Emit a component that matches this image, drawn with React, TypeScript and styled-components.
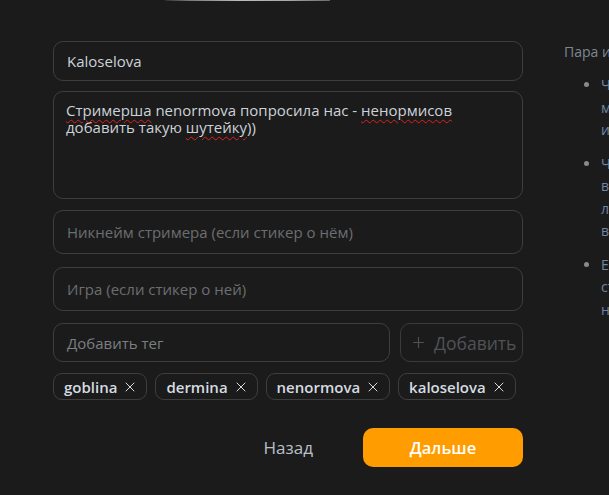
import React from "react";
import styled, { createGlobalStyle } from "styled-components";
import { X, Plus } from "lucide-react";

const Global = createGlobalStyle`
  html, body { margin: 0; padding: 0; background: #1b1b1b; overflow: hidden; }
  body { font-family: "Open Sans", "Noto Sans", sans-serif; color: #cfd3d8; }
  * { box-sizing: border-box; }
`;

const Page = styled.div`
  width: 609px;
  height: 495px;
  overflow: hidden;
  display: flex;
  flex-direction: column;
`;

const TopImage = styled.div`
  margin-left: 165px;
  width: 165px;
  height: 1px;
  background: linear-gradient(90deg, #2e2e2e, #7a7a7a 15%, #bdbdbd 45%, #a8a8a8 75%, #6a6a6a);
`;

const Body = styled.div`
  display: flex;
  gap: 41px;
  padding: 40px 0 0 53px;
`;

const FormCol = styled.div`
  width: 470px;
  flex-shrink: 0;
  display: flex;
  flex-direction: column;
`;

const Field = styled.div<{ $h: number; $mt: number; $placeholder?: boolean }>`
  height: ${(p) => p.$h}px;
  margin-top: ${(p) => p.$mt}px;
  border: 1px solid #3e3e3e;
  border-radius: 10px;
  padding: 0 13px;
  display: flex;
  align-items: center;
  font-size: 15px;
  color: ${(p) => (p.$placeholder ? "#6c6e71" : "#cdd2d8")};
  white-space: nowrap;
`;

const TextArea = styled.div`
  height: 108px;
  margin-top: 10px;
  border: 1px solid #3e3e3e;
  border-radius: 10px;
  padding: 10px 12px;
  font-size: 15px;
  line-height: 17px;
  color: #cdd2d8;
`;

const Misspelled = styled.span`
  text-decoration: underline wavy #e02020;
  text-decoration-thickness: 1px;
  text-underline-offset: 3px;
`;

const TagRow = styled.div`
  display: flex;
  gap: 10px;
  margin-top: 12px;
`;

const TagInput = styled(Field)`
  flex: 1;
  margin-top: 0;
  color: #7b7e82;
`;

const AddButton = styled.button`
  width: 123px;
  height: 39px;
  border: 1px solid #3a3a3a;
  border-radius: 10px;
  background: transparent;
  color: #505255;
  font-family: inherit;
  font-size: 17.5px;
  display: flex;
  align-items: center;
  gap: 7px;
  padding: 0 0 0 9px;
  white-space: nowrap;
`;

const Tags = styled.div`
  display: flex;
  gap: 8px;
  margin-top: 11px;
`;

const Tag = styled.div`
  height: 27px;
  border: 1px solid #3e3e3e;
  border-radius: 9px;
  padding: 0 8px 0 10px;
  display: flex;
  align-items: center;
  gap: 5px;
  font-size: 15px;
  font-weight: 600;
  color: #d6dbe1;
`;

const Actions = styled.div`
  display: flex;
  justify-content: flex-end;
  align-items: center;
  margin-top: 28px;
  gap: 50px;
`;

const BackButton = styled.button`
  background: none;
  border: none;
  color: #b9c0c8;
  font-family: inherit;
  font-size: 17px;
  font-weight: 500;
  padding: 0;
`;

const NextButton = styled.button`
  width: 160px;
  height: 39px;
  border: none;
  border-radius: 10px;
  background: #ff9c00;
  color: #ffffff;
  font-family: inherit;
  font-size: 16.5px;
  font-weight: 600;
`;

const InfoCol = styled.div`
  width: 260px;
  flex-shrink: 0;
  padding-top: 1px;
`;

const InfoTitle = styled.div`
  font-size: 14px;
  color: #7d8794;
  line-height: 20px;
`;

const InfoList = styled.ul`
  margin: 12px 0 0;
  padding-left: 37px;
  list-style: disc;
  font-size: 14px;
  line-height: 22.5px;
  color: #6f86a0;
  li { margin-bottom: 11px; }
  li::marker { color: #8a8a8a; }
`;

const tags = ["goblina", "dermina", "nenormova", "kaloselova"];

export default function App() {
  return (
    <Page>
      <Global />
      <TopImage />
      <Body>
        <FormCol>
          <Field $h={40} $mt={0}>Kaloselova</Field>
          <TextArea role="textbox">
            <Misspelled>Стримерша</Misspelled> nenormova попросила нас - <Misspelled>ненормисов</Misspelled>
            <br />
            добавить такую <Misspelled>шутейку</Misspelled>))
          </TextArea>
          <Field $h={44} $mt={11} $placeholder>Никнейм стримера (если стикер о нём)</Field>
          <Field $h={44} $mt={13} $placeholder>Игра (если стикер о ней)</Field>
          <TagRow>
            <TagInput $h={39} $mt={0}>Добавить тег</TagInput>
            <AddButton disabled>
              <Plus size={17} strokeWidth={1.6} />
              Добавить
            </AddButton>
          </TagRow>
          <Tags>
            {tags.map((t) => (
              <Tag key={t}>
                {t}
                <X size={16} strokeWidth={1.5} />
              </Tag>
            ))}
          </Tags>
          <Actions>
            <BackButton>Назад</BackButton>
            <NextButton>Дальше</NextButton>
          </Actions>
        </FormCol>
        <InfoCol>
          <InfoTitle>Пара инструкций для авторов:</InfoTitle>
          <InfoList>
            <li>Чем короче и смешнее<br />мем, тем лучше он<br />и будет работать</li>
            <li>Чтобы стикер попал<br />в подборку, укажите<br />логичные теги и<br />всех участников</li>
            <li>Если стикер про<br />стримера, укажите<br />никнейм</li>
          </InfoList>
        </InfoCol>
      </Body>
    </Page>
  );
}
